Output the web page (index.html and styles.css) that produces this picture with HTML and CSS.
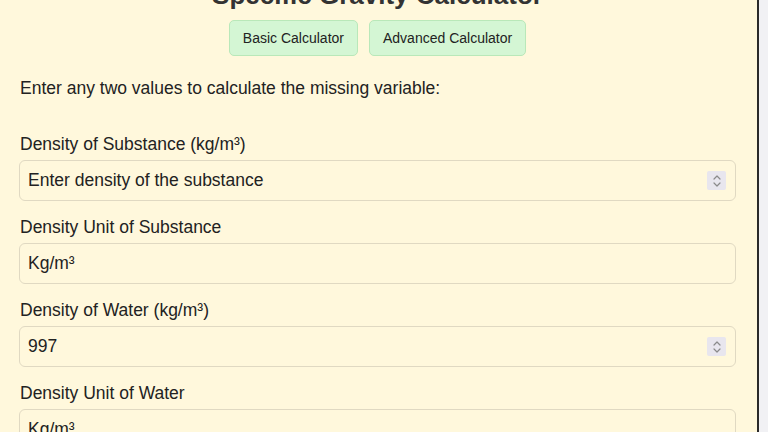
FILE: index.html
```html
<!DOCTYPE html>
<html lang="en">
<head>
  <meta charset="UTF-8" />
  <meta name="viewport" content="width=device-width, initial-scale=1.0"/>
  <title>Specific Gravity Calculator</title>
  <link rel="stylesheet" href="styles.css">
</head>
<body>
  <div class="container">
    <h1>Specific Gravity Calculator</h1>

    <div class="tabs">
      <button class="tab-btn">Basic Calculator</button>
      <button class="tab-btn">Advanced Calculator</button>
    </div>

    <p class="intro">Enter any two values to calculate the missing variable:</p>

    <div class="field">
      <label for="densitySubstance">Density of Substance (kg/m³)</label>
      <div class="input-wrap">
        <input type="number" id="densitySubstance" placeholder="Enter density of the substance" />
        <span class="spinner">
          <svg width="10" height="14" viewBox="0 0 10 14"><path d="M2 5 L5 2 L8 5 M2 9 L5 12 L8 9" fill="none" stroke="#8a8a8a" stroke-width="1.2" stroke-linecap="round" stroke-linejoin="round"/></svg>
        </span>
      </div>
    </div>

    <div class="field">
      <label for="unitSubstance">Density Unit of Substance</label>
      <input type="text" id="unitSubstance" value="Kg/m³" />
    </div>

    <div class="field">
      <label for="densityWater">Density of Water (kg/m³)</label>
      <div class="input-wrap">
        <input type="number" id="densityWater" value="997" />
        <span class="spinner">
          <svg width="10" height="14" viewBox="0 0 10 14"><path d="M2 5 L5 2 L8 5 M2 9 L5 12 L8 9" fill="none" stroke="#8a8a8a" stroke-width="1.2" stroke-linecap="round" stroke-linejoin="round"/></svg>
        </span>
      </div>
    </div>

    <div class="field">
      <label for="unitWater">Density Unit of Water</label>
      <input type="text" id="unitWater" value="Kg/m³" />
    </div>
  </div>
</body>
</html>
```

FILE: styles.css
```css
html, body {
  margin: 0;
  padding: 0;
  height: 100%;
  overflow: hidden;
}
body {
  font-family: 'Liberation Sans', Arial, sans-serif;
  background: #f1f1f4;
  color: #222;
}
.container {
  width: 759px;
  box-sizing: border-box;
  min-height: 100%;
  margin-top: -20px;
  padding: 0 21px 0 19px;
  background: #fff8dc;
  border-right: 2px solid #2a2a2a;
}
h1 {
  margin: 0;
  font-size: 26px;
  line-height: 30px;
  text-align: center;
  color: #333;
}
.tabs {
  display: flex;
  justify-content: center;
  gap: 11px;
  margin-top: 10px;
}
.tab-btn {
  font-family: 'Liberation Sans', Arial, sans-serif;
  font-size: 14px;
  line-height: 16px;
  padding: 9px 13px;
  color: #222;
  background: #d4f6d4;
  border: 1px solid #b9e8b9;
  border-radius: 5px;
  cursor: pointer;
}
.intro {
  margin: 22px 0 36px 1px;
  font-size: 17.5px;
  line-height: 20px;
}
.field {
  margin-bottom: 16px;
}
label {
  display: block;
  margin: 0 0 6px 1px;
  font-size: 17.5px;
  line-height: 20px;
}
.input-wrap {
  position: relative;
}
input {
  display: block;
  width: 100%;
  box-sizing: border-box;
  height: 41px;
  padding: 0 8px;
  font-family: 'Liberation Sans', Arial, sans-serif;
  font-size: 17.5px;
  color: #222;
  background: transparent;
  border: 1px solid #e0d9c2;
  border-radius: 6px;
  outline: none;
}
input::placeholder {
  color: #222;
  opacity: 1;
}
input::-webkit-inner-spin-button,
input::-webkit-outer-spin-button {
  -webkit-appearance: none;
  margin: 0;
}
.spinner {
  position: absolute;
  right: 10px;
  top: 11px;
  width: 19px;
  height: 19px;
  display: flex;
  align-items: center;
  justify-content: center;
  background: #e8e6ee;
  border-radius: 2px;
}
```
